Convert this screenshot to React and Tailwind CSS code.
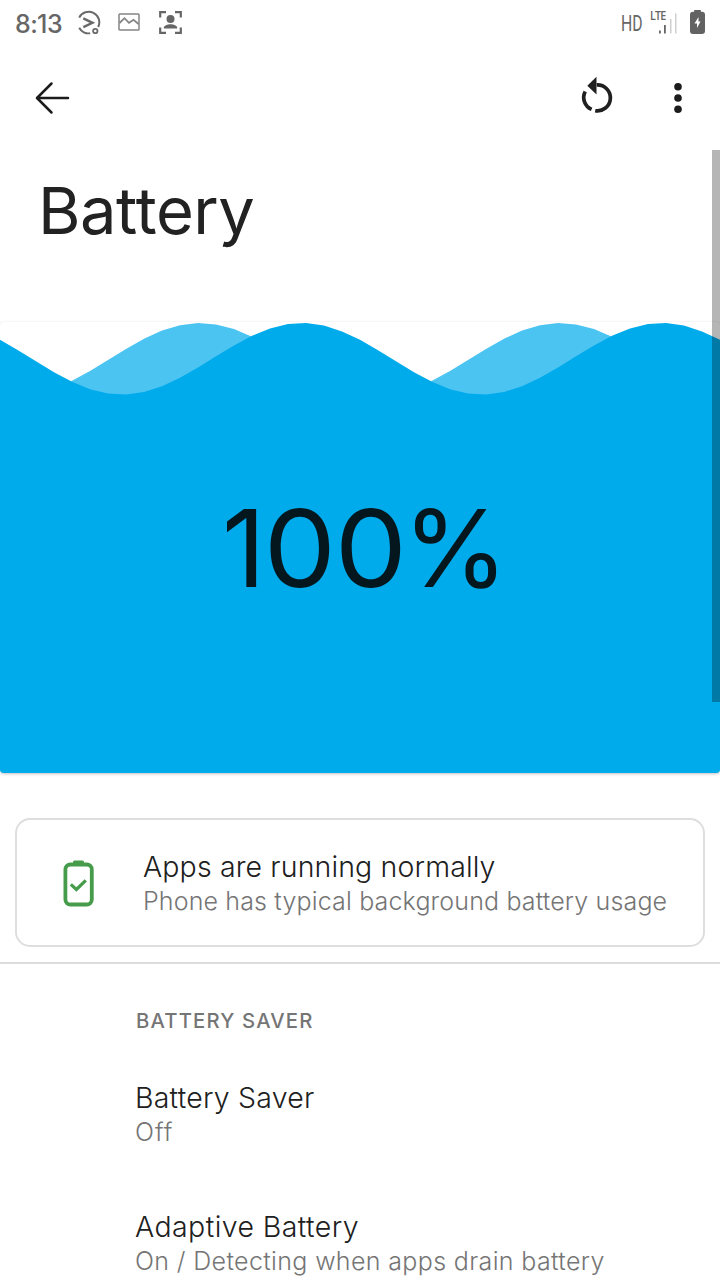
import React from 'react';

const WAVE_PERIOD = 360;

// Closed outline of a sine wave whose crest sits at `crest`, filled to the bottom.
function wavePath(crest) {
  let d = 'M0 451';
  for (let x = 0; x <= 720; x += 18) {
    const y = 36.8 - 35.8 * Math.cos((2 * Math.PI * (x - crest)) / WAVE_PERIOD);
    d += `L${x} ${y.toFixed(2)}`;
  }
  return d + 'L720 451Z';
}

function StatusBar() {
  return (
    <div className="flex h-11 shrink-0 items-center pl-[15px] text-[#666]">
      <span className="w-[62px] pt-[3px] text-[25px] leading-[30px] font-medium tracking-[-0.6px]">8:13</span>
      <svg className="mt-[1px]" width="24" height="26" viewBox="0 0 24 26" fill="none" stroke="#6a6a6a" strokeWidth="2">
        <path d="M2.2 7.6A10.4 10.4 0 1 1 21.2 17" />
        <path d="M2.2 17.8A10.4 10.4 0 0 0 13.2 23.2" />
        <path d="M6.3 8.4L15.5 12.8L6.3 17.2" strokeWidth="2.4" />
        <circle cx="18.3" cy="21" r="2.2" strokeWidth="1.8" />
      </svg>
      <svg className="ml-[17px]" width="22" height="18" viewBox="0 0 22 18" fill="none" stroke="#858585" strokeWidth="1.5">
        <rect x="1" y="1" width="20" height="16" rx="0.8" />
        <path d="M1.5 10L6.5 5.2L11 9.8L15.5 6.8L20.5 11" strokeWidth="1.8" />
      </svg>
      <svg className="ml-[19px]" width="23" height="23" viewBox="0 0 23 23" fill="none" stroke="#666" strokeWidth="2.2">
        <path d="M1.2 6.5V1.2H7M16 1.2H21.8V6.5M1.2 16.5V21.8H7M16 21.8H21.8V16.5" />
        <circle cx="11.5" cy="8" r="4" fill="#666" stroke="none" />
        <path d="M4.8 17.6V16.8C4.8 14.5 8.5 13.3 11.5 13.3S18.2 14.5 18.2 16.8V17.6Z" fill="#666" stroke="none" />
      </svg>
      <span className="ml-auto w-[29px] pt-[2px] font-['Roboto'] text-[22.5px] leading-[30px]">
        <span className="inline-block origin-left scale-x-[0.7]">HD</span>
      </span>
      <div className="flex h-[24px] w-[30px] flex-col">
        <span className="font-['Open_Sans'] text-[12px] leading-[12px] font-semibold tracking-[-1px]">
          <span className="inline-block origin-left scale-x-[0.9]">LTE</span>
        </span>
        <svg className="-mt-[10px]" width="30" height="22" viewBox="0 0 30 22">
          <path d="M9 18.5h1.8v3H9z M14 13h1.8v8.500H14z" fill="#666" />
          <path d="M20 7h1.500v14.500H20z M25 1.500h1.500v20H25z" fill="#cfcfcf" />
        </svg>
      </div>
      <svg className="mr-[15px] ml-[10px]" width="15" height="24" viewBox="0 0 15 24">
        <path d="M4.2 0h6.6v1.8h1.200a3 3 0 0 1 3 3v16.200a3 3 0 0 1-3 3h-9a3 3 0 0 1-3-3V4.800a3 3 0 0 1 3-3h1.200z" fill="#626262" />
        <path d="M8.500 7L4.500 13.500h2.500V18L10.500 11.500H8.500z" fill="#fff" />
      </svg>
    </div>
  );
}

function Toolbar() {
  return (
    <div className="flex h-[106px] shrink-0 items-center pt-[1px] pl-[35px]">
      <svg width="36" height="34" viewBox="0 0 36 34" fill="none" stroke="#1c1c1c" strokeWidth="2.500" strokeLinecap="round" strokeLinejoin="round">
        <path d="M33 17H2.500M16.500 2.500L2 17L16.500 31.500" />
      </svg>
      <svg className="-mt-[3px] ml-auto" width="36" height="40" viewBox="0 0 36 40" fill="none" stroke="#202020" strokeWidth="3.700">
        <path d="M17.700 8.900A13 13 0 1 1 16.200 34.700" />
        <path d="M12.600 33.400A13 13 0 0 1 6.200 15.500" />
        <path d="M8.300 9.800L17.500 .8V18.400Z" fill="#202020" stroke="none" />
      </svg>
      <svg className="mr-[35px] ml-[56px]" width="14" height="34" viewBox="0 0 14 34" fill="#1c1c1c">
        <circle cx="7" cy="5.700" r="3.800" />
        <circle cx="7" cy="17" r="3.800" />
        <circle cx="7" cy="28.200" r="3.800" />
      </svg>
    </div>
  );
}

function BatteryLevel() {
  return (
    <div className="relative h-[451px] shrink-0 overflow-hidden rounded-[4px] shadow-[0_1px_3px_rgba(0,0,0,0.25)]">
      <svg className="block" width="720" height="451" viewBox="0 0 720 451">
        <path d={wavePath(200)} fill="#4cc4f2" />
        <path d={wavePath(302)} fill="#00abec" />
      </svg>
      <div className="absolute inset-0 flex items-center justify-center pt-[2px] pl-[10px] text-[107px] text-[#04161e]">
        <span>1</span>
        <span className="mr-[3.5px] ml-[1px] scale-x-[1.07]">0</span>
        <span className="scale-x-[1.07]">0</span>
        <span className="-ml-[2px]">%</span>
      </div>
    </div>
  );
}

function Row({ title, summary, titleTracking, summaryTracking }) {
  return (
    <div className="flex flex-col leading-[34px] font-[350] whitespace-nowrap">
      <span className={`text-[28.5px] text-[#202020] ${titleTracking}`}>{title}</span>
      <span className={`text-[25px] text-[#757575] ${summaryTracking}`}>{summary}</span>
    </div>
  );
}

export default function App() {
  return (
    <div className="relative flex h-[1280px] w-[720px] flex-col overflow-hidden bg-white font-['Inter',sans-serif]">
      <StatusBar />
      <Toolbar />
      <h1 className="h-[172px] shrink-0 pt-[21px] pl-[38px] text-[65px] leading-[80px] font-[380] tracking-[-0.5px] text-[#222]">
        Ba<span className="tracking-[-1.5px]">t</span>tery
      </h1>
      <BatteryLevel />

      <div className="mx-[15px] mt-[45px] flex h-[129px] shrink-0 items-center rounded-[15px] border-2 border-[#dedede] pt-[2px] pl-[46px]">
        <svg width="32" height="48" viewBox="0 0 32 48" fill="none" stroke="#469c4b" strokeWidth="3.800">
          <rect x="2.400" y="4.500" width="26.400" height="40" rx="5" />
          <path d="M11.500 .500h8a1.500 1.500 0 0 1 1.500 1.500v3H10v-3a1.500 1.500 0 0 1 1.500-1.500z" fill="#469c4b" stroke="none" />
          <path d="M7.800 24.300L13.400 29.500L22.800 20.300" strokeWidth="3.200" />
        </svg>
        <div className="ml-[48px]">
          <Row
            title="Apps are running normally"
            summary="Phone has typical background battery usage"
            titleTracking="tracking-[0.13px]"
            summaryTracking="tracking-[0.15px]"
          />
        </div>
      </div>

      <div className="mt-[15px] h-[2px] shrink-0 bg-[#dcdcdc]" />

      <div className="flex flex-col pl-[135px]">
        <h2 className="mt-[42px] pl-[1px] text-[20.3px] leading-[30px] font-[450] tracking-[1.15px] text-[#757575]">BATTERY SAVER</h2>
        <div className="mt-[45px]">
          <Row title="Battery Saver" summary="Off" titleTracking="tracking-[0.22px]" summaryTracking="tracking-[1px]" />
        </div>
        <div className="mt-[61px]">
          <Row
            title="Adaptive Battery"
            summary="On / Detecting when apps drain battery"
            titleTracking="tracking-[0.42px]"
            summaryTracking="tracking-[0.36px]"
          />
        </div>
      </div>

      <div className="absolute top-[150px] right-0 h-[552px] w-[8px] bg-black/29" />
    </div>
  );
}
